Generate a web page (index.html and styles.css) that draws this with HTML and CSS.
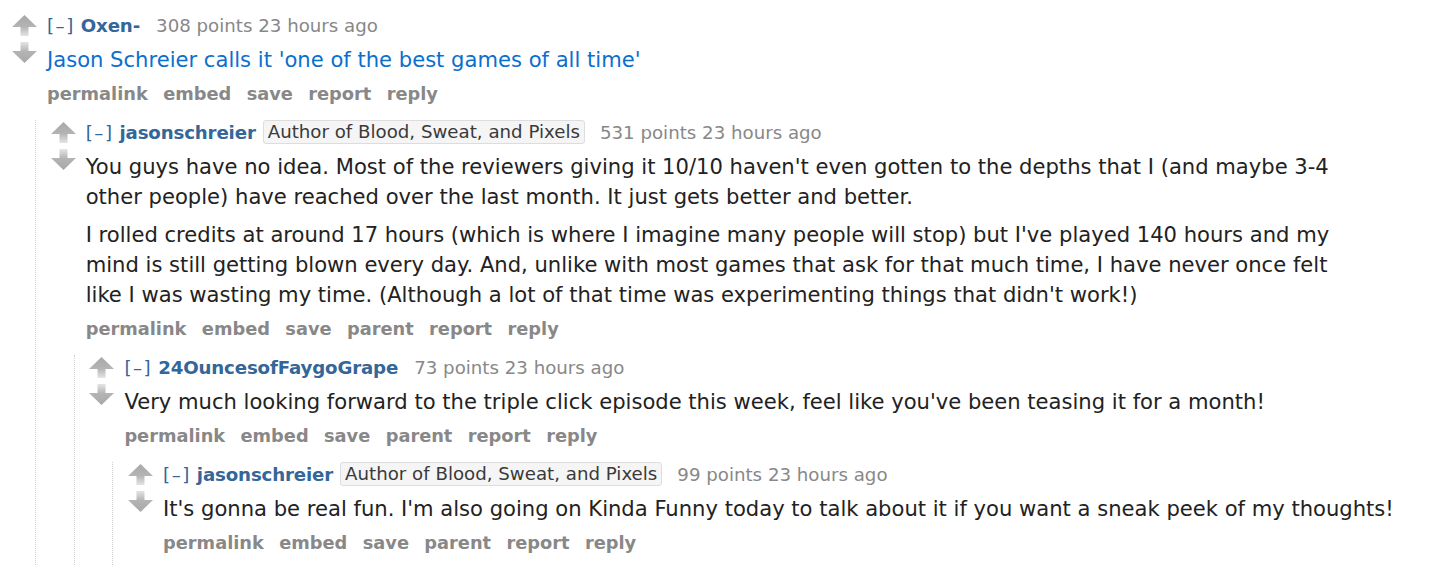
FILE: index.html
```html
<!DOCTYPE html>
<html lang="en">
<head>
<meta charset="utf-8">
<title>Comments</title>
<link rel="stylesheet" href="styles.css">
</head>
<body>
<svg width="0" height="0" class="defs" aria-hidden="true">
  <defs>
    <linearGradient id="gup" x1="0" y1="0" x2="0" y2="1">
      <stop offset="0" stop-color="#a8a8a8"/>
      <stop offset="0.55" stop-color="#b4b4b4"/>
      <stop offset="1" stop-color="#e4e4e4"/>
    </linearGradient>
    <linearGradient id="gdown" x1="0" y1="1" x2="0" y2="0">
      <stop offset="0" stop-color="#a8a8a8"/>
      <stop offset="0.55" stop-color="#b4b4b4"/>
      <stop offset="1" stop-color="#e4e4e4"/>
    </linearGradient>
    <symbol id="up" viewBox="0 0 25 21"><path d="M12.5 0 L25 12 L16.5 12 L16.5 21 L8.5 21 L8.5 12 L0 12 Z" fill="url(#gup)"/></symbol>
    <symbol id="down" viewBox="0 0 25 21"><path d="M12.5 21 L25 9 L16.5 9 L16.5 0 L8.5 0 L8.5 9 L0 9 Z" fill="url(#gdown)"/></symbol>
  </defs>
</svg>

<div class="comment">
  <div class="midcol">
    <svg class="arrow" width="25" height="21"><use href="#up"/></svg>
    <svg class="arrow" width="25" height="21"><use href="#down"/></svg>
  </div>
  <div class="entry">
    <p class="tagline"><span class="expand">[–]</span><span class="author">Oxen-</span><span class="score">308 points 23 hours ago</span></p>
    <div class="md"><p><span class="link">Jason Schreier calls it 'one of the best games of all time'</span></p></div>
    <ul class="buttons"><li>permalink</li><li>embed</li><li>save</li><li>report</li><li>reply</li></ul>

    <div class="child">
      <div class="comment">
        <div class="midcol">
          <svg class="arrow" width="25" height="21"><use href="#up"/></svg>
          <svg class="arrow" width="25" height="21"><use href="#down"/></svg>
        </div>
        <div class="entry">
          <p class="tagline"><span class="expand">[–]</span><span class="author">jasonschreier</span><span class="flair">Author of Blood, Sweat, and Pixels</span><span class="score">531 points 23 hours ago</span></p>
          <div class="md">
            <p>You guys have no idea. Most of the reviewers giving it 10/10 haven't even gotten to the depths that I (and maybe 3-4 other people) have reached over the last month. It just gets better and better.</p>
            <p>I rolled credits at around 17 hours (which is where I imagine many people will stop) but I've played 140 hours and my mind is still getting blown every day. And, unlike with most games that ask for that much time, I have never once felt like I was wasting my time. (Although a lot of that time was experimenting things that didn't work!)</p>
          </div>
          <ul class="buttons"><li>permalink</li><li>embed</li><li>save</li><li>parent</li><li>report</li><li>reply</li></ul>

          <div class="child">
            <div class="comment">
              <div class="midcol">
                <svg class="arrow" width="25" height="21"><use href="#up"/></svg>
                <svg class="arrow" width="25" height="21"><use href="#down"/></svg>
              </div>
              <div class="entry">
                <p class="tagline"><span class="expand">[–]</span><span class="author">24OuncesofFaygoGrape</span><span class="score">73 points 23 hours ago</span></p>
                <div class="md"><p>Very much looking forward to the triple click episode this week, feel like you've been teasing it for a month!</p></div>
                <ul class="buttons"><li>permalink</li><li>embed</li><li>save</li><li>parent</li><li>report</li><li>reply</li></ul>

                <div class="child">
                  <div class="comment">
                    <div class="midcol">
                      <svg class="arrow" width="25" height="21"><use href="#up"/></svg>
                      <svg class="arrow" width="25" height="21"><use href="#down"/></svg>
                    </div>
                    <div class="entry">
                      <p class="tagline"><span class="expand">[–]</span><span class="author">jasonschreier</span><span class="flair">Author of Blood, Sweat, and Pixels</span><span class="score">99 points 23 hours ago</span></p>
                      <div class="md"><p>It's gonna be real fun. I'm also going on Kinda Funny today to talk about it if you want a sneak peek of my thoughts!</p></div>
                      <ul class="buttons"><li>permalink</li><li>embed</li><li>save</li><li>parent</li><li>report</li><li>reply</li></ul>
                      <div class="child tail"></div>
                    </div>
                  </div>
                </div>
              </div>
            </div>
          </div>
        </div>
      </div>
    </div>
  </div>
</div>
</body>
</html>
```

FILE: styles.css
```css
html, body {
  margin: 0;
  background: #ffffff;
}
body {
  padding: 13px 0 0 12px;
  font-family: "DejaVu Sans", Verdana, sans-serif;
  color: #222222;
  height: 566px;
  box-sizing: border-box;
  overflow: hidden;
}
.defs {
  position: absolute;
  width: 0;
  height: 0;
}
.comment {
  display: flex;
  align-items: flex-start;
}
.midcol {
  width: 25px;
  flex: none;
  margin-right: 10px;
  padding-top: 2px;
  display: flex;
  flex-direction: column;
  gap: 6px;
}
.arrow {
  display: block;
}
.entry {
  flex: 1;
  min-width: 0;
}
.tagline {
  margin: 0 0 8px;
  height: 24px;
  display: flex;
  align-items: center;
  font-size: 18.2px;
  color: #888888;
  white-space: nowrap;
}
.expand {
  color: #336699;
  letter-spacing: 1.5px;
  margin-right: 6px;
}
.author {
  color: #336699;
  font-weight: bold;
  letter-spacing: -0.15px;
  margin-right: 16px;
}
.flair {
  margin-left: -9px;
  margin-right: 15px;
  background: #f5f5f5;
  border: 1px solid #dddddd;
  border-radius: 3px;
  color: #3a3a3a;
  padding: 0 4px;
  height: 22px;
  line-height: 22px;
}
.score {
  color: #888888;
}
.md {
  font-size: 21.1px;
  line-height: 30px;
  color: #222222;
  max-width: 60em;
}
.md p {
  margin: 0;
}
.md p + p {
  margin-top: 8px;
}
.link {
  color: #0a6fcf;
}
.buttons {
  list-style: none;
  margin: 6px 0 0;
  padding: 0;
  height: 24px;
  display: flex;
  align-items: center;
  gap: 15.4px;
  font-size: 17.8px;
  font-weight: bold;
  color: #888888;
}
.child {
  margin: 15px 0 0 -12px;
  border-left: 1px dotted #d0d0d0;
  padding-left: 14.7px;
}
.child.tail {
  height: 40px;
}
```
